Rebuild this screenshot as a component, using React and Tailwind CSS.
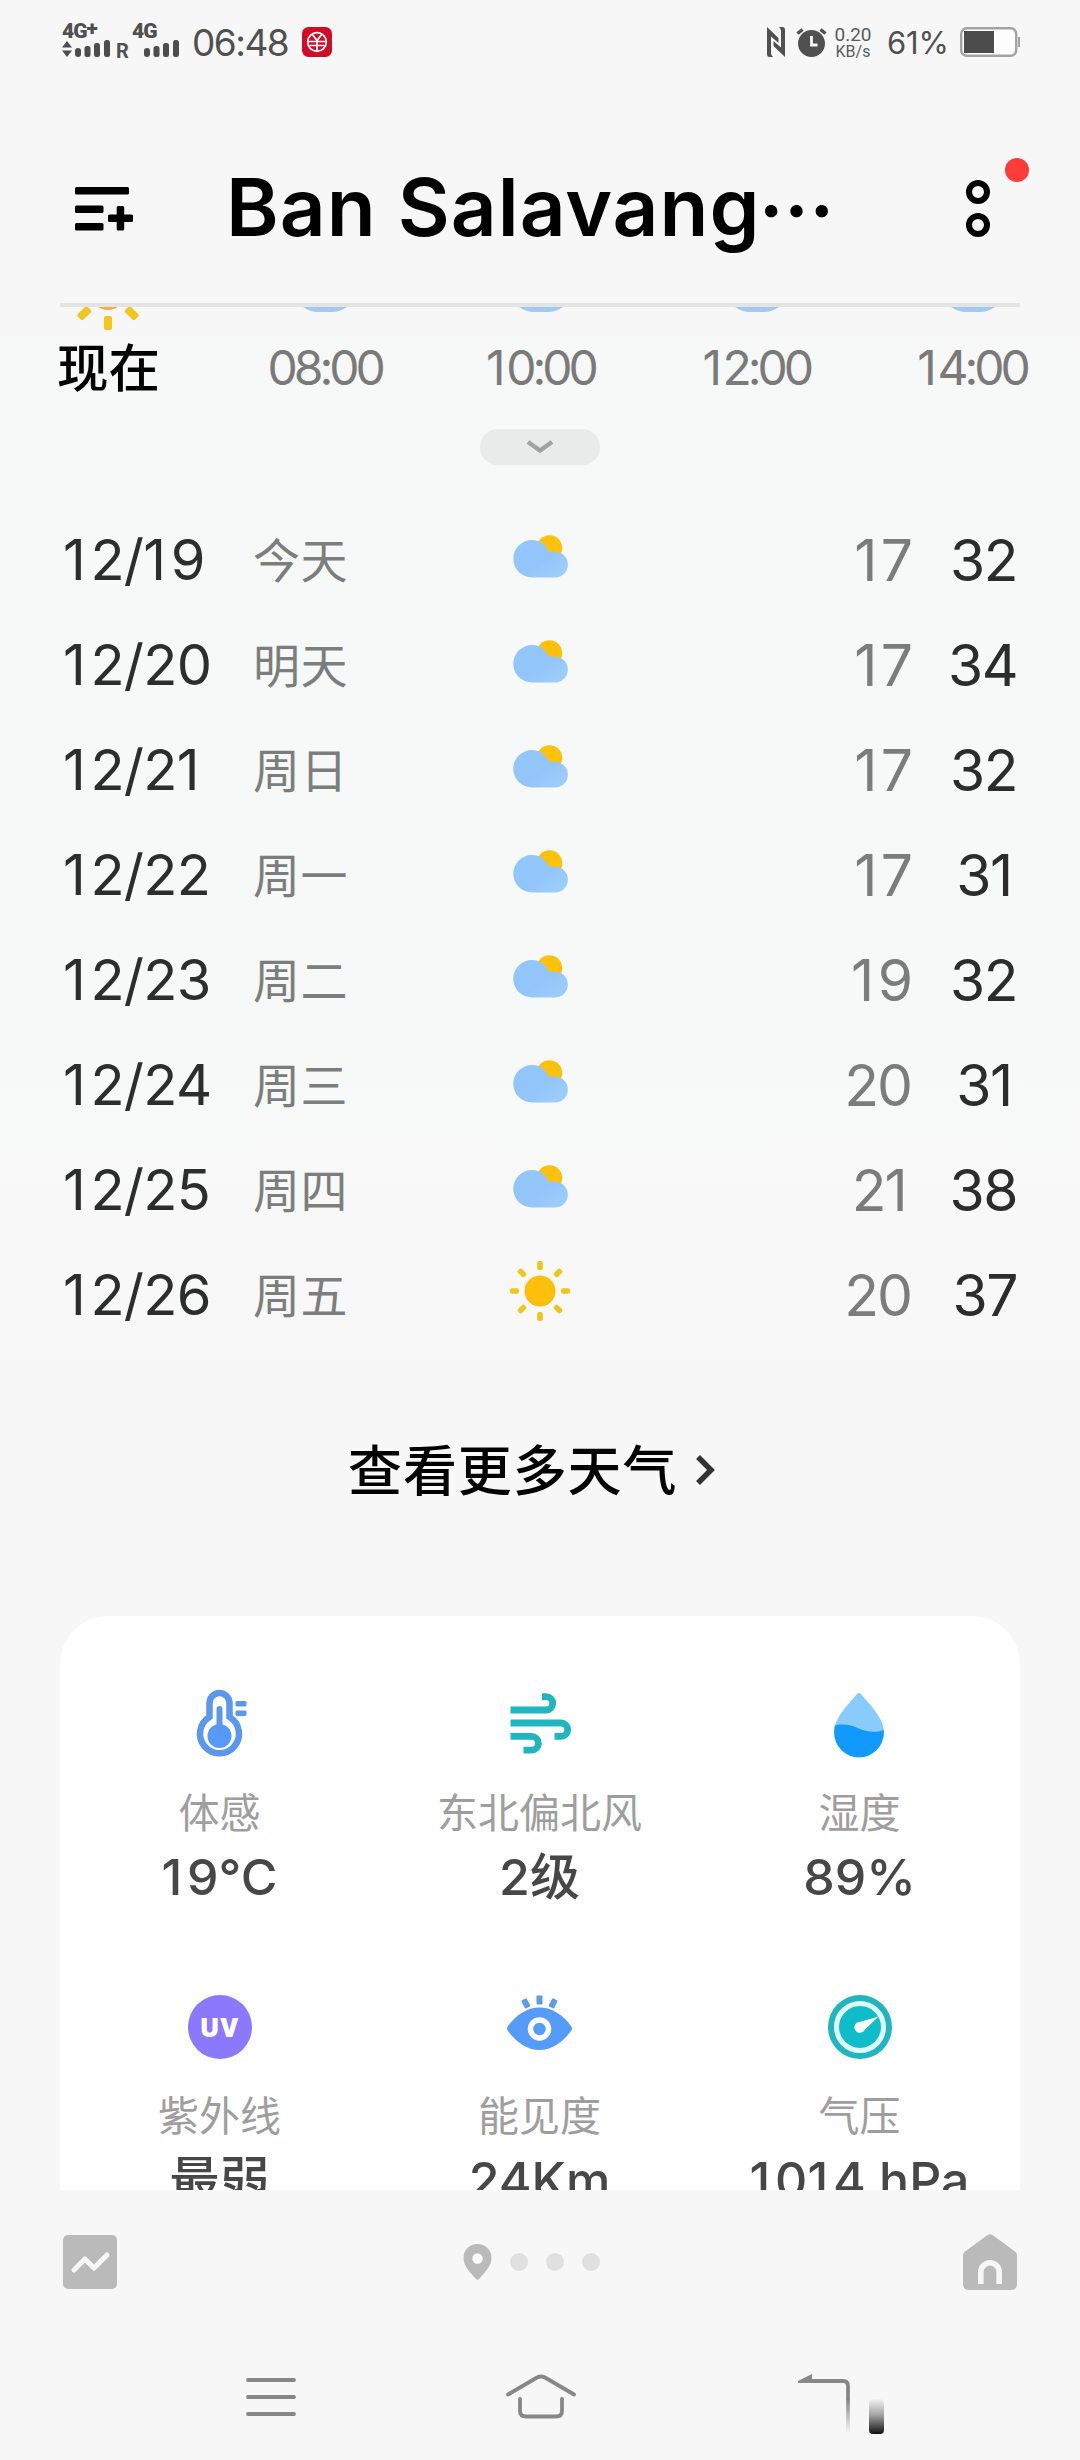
import React from 'react';

const hours = ['08:00', '10:00', '12:00', '14:00'];

const days = [
  { date: '12/19', name: '今天', icon: 'cloud', low: 17, high: 32 },
  { date: '12/20', name: '明天', icon: 'cloud', low: 17, high: 34 },
  { date: '12/21', name: '周日', icon: 'cloud', low: 17, high: 32 },
  { date: '12/22', name: '周一', icon: 'cloud', low: 17, high: 31 },
  { date: '12/23', name: '周二', icon: 'cloud', low: 19, high: 32 },
  { date: '12/24', name: '周三', icon: 'cloud', low: 20, high: 31 },
  { date: '12/25', name: '周四', icon: 'cloud', low: 21, high: 38 },
  { date: '12/26', name: '周五', icon: 'sun', low: 20, high: 37 },
];

// Inter sets its "1" tight, so give it a little room on the right
const Digits = ({ children }) =>
  String(children)
    .split(/(1)/)
    .map((part, i) =>
      part === '1' ? (
        <span key={i} className="mr-[0.095em]">1</span>
      ) : (
        part
      )
    );

const CloudIcon = () => (
  <svg width="60" height="60" viewBox="0 0 60 60">
    <defs>
      <linearGradient id="cloud" x1="0" y1="0" x2="1" y2="1">
        <stop offset="0" stopColor="#90c8fd" />
        <stop offset="0.55" stopColor="#93c5fa" />
        <stop offset="1" stopColor="#9fd0fb" />
      </linearGradient>
    </defs>
    <circle cx="39.500" cy="22" r="12.700" fill="#fdc10a" />
    <path
      d="M22 14c8 0 13 4 16 10 1 1.500 2 1.800 4 1.800h3A11.500 11.500 0 0 1 45 51.500H22A18.750 18.750 0 0 1 22 14Z"
      fill="url(#cloud)"
    />
  </svg>
);

const SunIcon = () => (
  <svg width="60" height="60" viewBox="0 0 60 60">
    <circle cx="30" cy="30" r="15.500" fill="#fcbf0c" />
    {[0, 45, 90, 135, 180, 225, 270, 315].map((a) => (
      <rect key={a} x="27.200" y="0" width="5.600" height="9" rx="1.800" fill="#ecc71c" transform={`rotate(${a} 30 30)`} />
    ))}
  </svg>
);

const ThermometerIcon = () => (
  <svg width="80" height="80" viewBox="0 0 80 80">
    <path
      d="M29.500 33V19a10 10 0 0 1 20 0v14a19.500 19.500 0 1 1-20 0Z"
      fill="none"
      stroke="#5b98ec"
      strokeWidth="6.500"
    />
    <circle cx="39.500" cy="52" r="12" fill="#559afb" />
    <path d="M39.500 25v24" stroke="#5b98ec" strokeWidth="6" strokeLinecap="round" />
    <rect x="55.500" y="17" width="11" height="5.500" rx="1.500" fill="#5b98ec" />
    <rect x="55.500" y="26.500" width="11" height="5.500" rx="1.500" fill="#5b98ec" />
  </svg>
);

const WindIcon = () => (
  <svg width="80" height="80" viewBox="0 0 80 80" fill="none" stroke="#1fb5c1" strokeWidth="6.800">
    <path d="M10.500 26H46a6.700 6.700 0 0 0 0-13.400H42" />
    <path d="M10.500 39H61a6.600 6.600 0 0 1 0 13.300H54.500" />
    <path d="M10.500 52.300H31.500a6.900 6.900 0 0 1 0 13.800H23.500" />
  </svg>
);

const DropIcon = () => (
  <svg width="80" height="80" viewBox="0 0 80 80">
    <path d="M36.800 10.300q2-2.800 4.400 0C50 21 64 34.500 64 48.500a25 25 0 0 1-50 0C14 34.500 28 21 36.800 10.300Z" fill="#88cbfd" />
    <path d="M14.800 41.500c8-2 16-1 23 2.500s17 5.500 26 2v2.500a24.700 24.700 0 0 1-49.600 0Z" fill="#1199fd" />
  </svg>
);

const UvIcon = () => (
  <div className="flex h-16 w-16 items-center justify-center rounded-full bg-[#8b78fc] font-['Open_Sans'] text-[26px] font-extrabold tracking-[1px] text-white">
    UV
  </div>
);

const EyeIcon = () => (
  <svg width="80" height="80" viewBox="0 0 80 80">
    <path d="M8 44c-1.300-1.800-1.300-3.200 0-5C16 28 27 20.500 39.500 20.500S63 28 71 39c1.300 1.800 1.300 3.200 0 5C63 55 52 63 39.500 63S16 55 8 44Z" fill="#559bf9" />
    <circle cx="39.500" cy="42" r="9" fill="none" stroke="#fff" strokeWidth="5.500" />
    <rect x="36.500" y="8.500" width="6" height="9" rx="1" fill="#5c9be6" />
    <rect x="36.500" y="8.500" width="6" height="9" rx="1" fill="#5c9be6" transform="rotate(-28 39.500 42)" />
    <rect x="36.500" y="8.500" width="6" height="9" rx="1" fill="#5c9be6" transform="rotate(28 39.500 42)" />
  </svg>
);

const GaugeIcon = () => (
  <svg width="80" height="80" viewBox="0 0 80 80">
    <circle cx="40" cy="40" r="32" fill="#20b5bf" />
    <circle cx="40" cy="40" r="23.500" fill="#0fbdca" stroke="#dffcfb" strokeWidth="5" />
    <path d="M58.500 29.500 44.500 43a5.400 5.400 0 1 1-5-8Z" fill="#fff" />
  </svg>
);

const metrics = [
  { label: '体感', value: '19°C', Icon: ThermometerIcon },
  { label: '东北偏北风', value: '2级', Icon: WindIcon },
  { label: '湿度', value: '89%', Icon: DropIcon },
  { label: '紫外线', value: '最弱', Icon: UvIcon },
  { label: '能见度', value: '24Km', Icon: EyeIcon },
  { label: '气压', value: '1014 hPa', Icon: GaugeIcon },
];

const SignalBars = () => (
  <svg width="35" height="17" viewBox="0 0 35 17" fill="#4d4d4d">
    <rect x="0" y="8" width="6" height="9" rx="3" />
    <rect x="9.500" y="6" width="6" height="11" rx="2.500" />
    <rect x="19" y="3" width="6" height="14" rx="2.500" />
    <rect x="29" y="0" width="6" height="17" rx="2.500" />
  </svg>
);

const StatusBar = () => (
  <div className="flex h-[86px] justify-between pl-[62px] pr-[60px] text-[#505050]">
    <div className="flex">
      <div className="flex w-[54px] flex-col pt-[23px]">
        <span className="flex whitespace-nowrap font-['Roboto'] text-[21px] font-black leading-[17px] tracking-[-1px]">
          4G<span className="-mt-[3px]">+</span>
        </span>
        <div className="flex items-end gap-[3px]">
          <svg width="10" height="16" viewBox="0 0 10 16" fill="#4d4d4d">
            <path d="M5 0l5 6.500H0zM5 16l5-6.500H0z" />
          </svg>
          <SignalBars />
        </div>
      </div>
      <span className="w-4 pt-[41px] font-['Roboto'] text-[20px] font-bold leading-5">R</span>
      <div className="flex w-[60px] flex-col pt-[23px]">
        <span className="font-['Roboto'] text-[21px] font-black leading-[17px] tracking-[-1px]">4G</span>
        <div className="flex pl-3">
          <SignalBars />
        </div>
      </div>
      <span className="w-[110px] whitespace-nowrap pt-[22px] text-[37px] font-normal leading-[42px] tracking-[-1.500px]">06:48</span>
      <svg className="mt-[27px]" width="30" height="30" viewBox="0 0 30 30" fill="none" stroke="#fff" strokeWidth="1.700">
        <rect width="30" height="30" rx="6.500" fill="#cf0d27" stroke="none" />
        <circle cx="15" cy="15" r="9.300" />
        <path d="M10 7l5 6.500L20 7M6 14.500h18M7.500 18.500h15M15 13.500V24" />
      </svg>
    </div>
    <div className="flex">
      <svg className="mt-[27px]" width="18" height="30" viewBox="0 0 18 30" fill="#505050">
        <path d="M0 0l11.500 11v5L4 9.500V26q0 2.500 2 4H2.500Q0 30 0 27Z" />
        <path d="M18 30L6.500 19v-5l7.500 6.500V4q0-2.500-2-4h3.500Q18 0 18 3Z" />
      </svg>
      <svg className="ml-[11px] mt-[28px]" width="31" height="30" viewBox="0 0 31 30" fill="none">
        <circle cx="15.500" cy="15.500" r="13.500" fill="#505050" />
        <path d="M1.500 5.500L6.500 1.500M24.500 1.500l5 4" stroke="#505050" strokeWidth="3.500" />
        <path d="M15.500 8v9h6" stroke="#f7f7f7" strokeWidth="2.800" />
      </svg>
      <div className="ml-[7px] flex w-[38px] flex-col items-center pt-[25px] font-['Roboto'] text-[#5a5a5a]">
        <span className="text-[19px] leading-[20px]">0.20</span>
        <span className="text-[16px] leading-[13px]">KB/s</span>
      </div>
      <span className="ml-[15px] w-[73px] whitespace-nowrap pt-[23px] text-[31px] leading-[40px] tracking-[-0.200px]">61%</span>
      <svg className="mt-[27px]" width="60" height="30" viewBox="0 0 60 30">
        <rect x="1.200" y="1.200" width="55" height="27.600" rx="5.500" fill="#fdfdfd" stroke="#a3a3a3" strokeWidth="2.400" />
        <rect x="4" y="4" width="30" height="22" fill="#4c4c4c" />
        <rect x="58" y="10" width="2" height="10" fill="#a3a3a3" />
      </svg>
    </div>
  </div>
);

const Header = () => (
  <header className="flex h-[217px] items-start pl-[75px] pt-[72px]">
    <svg className="mt-[27px]" width="58" height="46" viewBox="0 0 58 46">
      <rect x="0" y="2" width="54" height="7.500" rx="1.500" />
      <rect x="0" y="20.500" width="28.500" height="7.500" rx="1.500" />
      <rect x="0" y="38" width="28.500" height="7.500" rx="1.500" />
      <rect x="33" y="29.500" width="25" height="7.500" rx="1.500" />
      <rect x="41.700" y="21" width="7.500" height="24.500" rx="1.500" />
    </svg>
    <h1 className="ml-[93px] flex w-[607px] whitespace-nowrap text-[80px] font-semibold leading-[98px] tracking-[1px] text-black">
      Ban Salavang
      <span className="-ml-[2px] font-['Noto_Sans_CJK_SC'] text-[76px]">…</span>
    </h1>
    <div className="relative ml-[133px] mt-[22px] h-[60px] w-6">
      <svg width="24" height="60" viewBox="0 0 24 60" fill="none" stroke="#000" strokeWidth="6">
        <circle cx="12" cy="12" r="9" />
        <circle cx="12" cy="45" r="9" />
      </svg>
      <span className="absolute -top-[22px] left-[39px] h-6 w-6 rounded-full bg-[#ff3b37]" />
    </div>
  </header>
);

const HourStrip = () => (
  <div className="shrink-0">
    <div className="mx-[60px] h-1 bg-[#e3e4e4]" />
    <div className="flex h-[31px] overflow-hidden">
      <div className="flex w-[216px] shrink-0 justify-center">
        <svg width="64" height="24" viewBox="0 0 64 24">
          <circle cx="32" cy="-14" r="17" fill="#f3ad44" />
          <rect x="28" y="9" width="8" height="14" rx="2" fill="#f3c61f" />
          <rect x="28" y="9" width="8" height="14" rx="2" fill="#f3c61f" transform="rotate(45 32 -17.500)" />
          <rect x="28" y="9" width="8" height="14" rx="2" fill="#f3c61f" transform="rotate(-45 32 -17.500)" />
        </svg>
      </div>
      {hours.map((h) => (
        <div key={h} className="flex w-[216px] shrink-0 justify-center pl-[2px]">
          <svg width="46" height="6" viewBox="0 0 46 6">
            <path d="M1 0H45Q38 5 30 5H16Q8 5 1 0Z" fill="#a3caee" />
          </svg>
        </div>
      ))}
    </div>
    <div className="flex h-[60px] items-center text-[48px] leading-[60px]">
      <span className="w-[217px] text-center text-[51.500px] font-medium text-black">现在</span>
      {hours.map((h) => (
        <span key={h} className="w-[216px] text-center tracking-[-4px] text-[#7a7a7a]">
          <Digits>{h}</Digits>
        </span>
      ))}
    </div>
  </div>
);

const DayRow = ({ day }) => (
  <li className="flex h-[105px] items-center">
    <span className="w-[190px] text-[56px] leading-none tracking-[-0.700px] text-[#2c2e2e]">
      <Digits>{day.date}</Digits>
    </span>
    <span className="w-[257px] pt-[2px] text-[47px] leading-none tracking-[0.600px] text-[#7c7e7d]">{day.name}</span>
    <span className="w-[60px] -translate-y-[4px]">{day.icon === 'sun' ? <SunIcon /> : <CloudIcon />}</span>
    <span className="w-[341px] pt-[1px] text-right text-[57px] leading-none tracking-[-2px] text-[#7c7c7c]">
      <Digits>{day.low}</Digits>
    </span>
    <span className="w-[106px] pt-[1px] text-right text-[57px] leading-none tracking-[-1.500px] text-[#2c2c2c]">
      <Digits>{day.high}</Digits>
    </span>
  </li>
);

const App = () => {
  return (
    <div className="flex h-[2460px] w-[1080px] flex-col overflow-hidden bg-[#f7f7f7] font-['Inter','Noto_Sans_CJK_SC',sans-serif]">
      <StatusBar />
      <Header />

      <main className="flex h-[1887px] flex-col overflow-hidden bg-[linear-gradient(to_bottom,#f7f7f7_0px,#f7f9f8_90px,#f7f9f8_700px,#f8f8f8_960px,#f7f7f7_1300px)]">
        <HourStrip />

        <div className="mx-auto mt-[31px] flex h-9 w-[120px] shrink-0 items-center justify-center rounded-full bg-[#e9ebeb]">
          <svg width="28" height="16" viewBox="0 0 28 16" fill="none" stroke="#a0a2a2" strokeWidth="4.500">
            <path d="M2 3l12 8.500L26 3" />
          </svg>
        </div>

        <ul className="mt-[42px] shrink-0 pl-[63px]">
          {days.map((day) => (
            <DayRow key={day.date} day={day} />
          ))}
        </ul>

        <button className="mt-[85px] flex h-[80px] shrink-0 items-center pl-[348px] text-[54px] font-medium leading-[80px] tracking-[0.900px] text-black">
          查看更多天气
          <svg className="ml-[17px] -mt-1" width="22" height="32" viewBox="0 0 22 32" fill="none" stroke="#333" strokeWidth="5.500">
            <path d="M4 3l13 13L4 29" />
          </svg>
        </button>

        <section className="mx-[60px] mt-[104px] grid shrink-0 grid-cols-3 rounded-t-[48px] bg-white pt-[68px]">
          {metrics.map(({ label, value, Icon }) => (
            <div key={label} className="flex h-[303px] flex-col items-center pr-[1px]">
              <div className="flex h-20 items-center">
                <Icon />
              </div>
              <span className="mt-[19px] text-[41px] font-normal leading-[60px] text-[#9e9e9e]">{label}</span>
              <span className="mt-1 whitespace-nowrap text-[50px] font-medium leading-[60px] text-[#474747]">
                <Digits>{value}</Digits>
              </span>
            </div>
          ))}
        </section>
      </main>

      <div className="flex h-[144px] items-center justify-between px-[63px]">
        <svg width="54" height="54" viewBox="0 0 54 54">
          <rect width="54" height="54" rx="5" fill="#bababa" />
          <path d="M11 35l11-11 9 9 13-13" fill="none" stroke="#f7f7f7" strokeWidth="5" strokeLinecap="round" strokeLinejoin="round" />
        </svg>
        <div className="flex items-center gap-[18px] pr-[18px]">
          <svg width="29" height="36" viewBox="0 0 29 36">
            <path d="M14.500 0A14 14 0 0 1 28.500 14c0 8-7 15-12.500 21q-1.500 1.500-3 0C7.500 29 .5 22 .5 14A14 14 0 0 1 14.500 0Z" fill="#bababa" />
            <circle cx="14.500" cy="14.500" r="5.200" fill="#fff" />
          </svg>
          <span className="h-[18px] w-[18px] rounded-full bg-[#e0e0e0]" />
          <span className="h-[18px] w-[18px] rounded-full bg-[#e0e0e0]" />
          <span className="h-[18px] w-[18px] rounded-full bg-[#e0e0e0]" />
        </div>
        <svg width="54" height="56" viewBox="0 0 54 56">
          <path d="M24.500 1q2.500-1.500 5 0L52 17.500q2 1.500 2 4V50q0 6-6 6H6q-6 0-6-6V21.500q0-2.500 2-4Z" fill="#bababa" />
          <path d="M17.800 50V38a9.200 9.200 0 0 1 18.400 0v12" fill="none" stroke="#f7f7f7" strokeWidth="5.600" />
        </svg>
      </div>

      <nav className="flex h-[126px] items-start pl-[246px] pt-[39px]">
        <svg className="mt-1" width="50" height="40" viewBox="0 0 50 40" stroke="#878787" strokeWidth="3.800" strokeLinecap="round">
          <path d="M2 3h46M2 20h46M2 37h46" />
        </svg>
        <svg className="ml-[210px]" width="70" height="46" viewBox="0 0 70 46" fill="none" stroke="#878787" strokeWidth="3.800" strokeLinecap="round" strokeLinejoin="round">
          <path d="M2 21.500L31 4.500q4-2 8 0L68 21.500" />
          <path d="M14 26v12q0 5.500 6 5.500h30q6 0 6-5.500V26" />
        </svg>
        <svg className="ml-[222px]" width="90" height="66" viewBox="0 0 90 66">
          <defs>
            <linearGradient id="fade" x1="0" y1="26" x2="0" y2="60" gradientUnits="userSpaceOnUse">
              <stop offset="0" stopColor="#878787" />
              <stop offset="1" stopColor="#878787" stopOpacity="0" />
            </linearGradient>
            <linearGradient id="smudge" x1="0" y1="0" x2="0" y2="1">
              <stop offset="0" stopColor="#f3f3f3" />
              <stop offset="0.450" stopColor="#a5a5a5" />
              <stop offset="1" stopColor="#111" />
            </linearGradient>
          </defs>
          <path d="M14 7v1h31q5 0 5 5v14" fill="none" stroke="#878787" strokeWidth="3.800" strokeLinejoin="round" />
          <path d="M0 8L14 1v9H0z" fill="#878787" />
          <rect x="48.100" y="26" width="3.800" height="34" fill="url(#fade)" />
          <rect x="71" y="26" width="15" height="35" rx="4" fill="url(#smudge)" />
        </svg>
      </nav>
    </div>
  );
};

export default App;
